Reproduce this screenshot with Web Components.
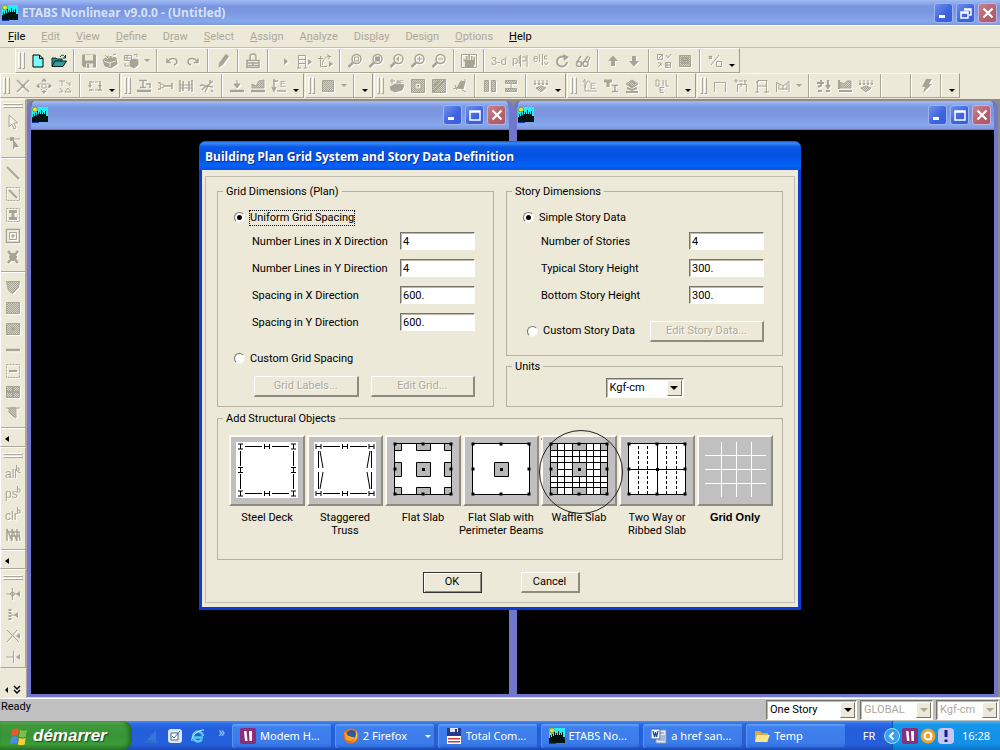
<!DOCTYPE html>
<html lang="fr">
<head>
<meta charset="utf-8">
<title>ETABS Nonlinear v9.0.0 - (Untitled)</title>
<style>
  html, body { margin: 0; height: 100%; }
  body { font: 11px/14px Roboto, "Liberation Sans", Arial, sans-serif; color: #000; overflow: hidden; }
</style>
</head>
<body>
<etabs-desktop></etabs-desktop>

<script>
/* Small helper: attach an open root holding the given styles and markup. */
function build(el, css, html) {
  const t = document.createElement('template');
  t.innerHTML = '<style>*{box-sizing:border-box}:host([hidden]){display:none}' + css + '</style>' + html;
  el.attachShadow({ mode: 'open' }).append(t.content.cloneNode(true));
  return el.shadowRoot;
}

const txt = (x, y, s, size) => `<text x="${x}" y="${y}" font-size="${size}" font-family="Liberation Sans, sans-serif" fill="currentColor" stroke="none">${s}</text>`;
const lens = '<circle cx="9.500" cy="6" r="4.500" stroke-width="1.500"/><path d="M6 9.500L1.500 14" stroke-width="2.500"/>';
const F = 'fill="currentColor" stroke="none"';
const H = 'fill="url(#dots)" ';

const ICONS = {
  new: '<path d="M3 2h6.500l3.500 3.500V14H3z" fill="#7ff" stroke="#000"/><path d="M9.500 2v3.500H13" stroke="#000"/>',
  open: '<path d="M1 13V5h4l1 1h5v2" fill="#2a8a8a" stroke="#033"/><path d="M1 13.500L4 8h11.500L12 13.500z" fill="#3a9a98" stroke="#022"/><path d="M9 4c2-3 4-2 5 .5M14.500 2v3h-3" stroke="#033"/>',
  save: `<path d="M1 1.500h14v13H3l-2-2z" ${F}/><path d="M4 2h8v5.500H4zM5 10.500h7V15H5z" fill="#ece9d8" stroke="none"/><path d="M6 11h2v4H6z" ${F}/>`,
  cube: `<path d="M1 7l5-4 8 2 1 6-6 4-6-2z" fill="currentColor"/><path d="M3 3l3 3M7 1v4M12 1l-2 4M2 8l5 2 7-2M8 10v4" stroke="#ece9d8"/><path d="M3 2l2 2M11 2l3-1"/>`,
  cube2: `<path d="M1.500 2.500h7v5h-7zM4 2v6M1 5h8" /><path d="M7 9l3-3 5 1v5l-4 3-4-2z" fill="currentColor"/><path d="M2 10v3h4M8 10l3 1 3-2" /><path d="M11 2l3-1v3"/>`,
  undo: '<path d="M3 5.500v4h4M3.500 9c3-5 9-4 9.500-.5.200 2-1.500 3-3 3.500" stroke-width="1.500"/>',
  redo: '<path d="M13 5.500v4H9M12.500 9C9.500 4 3.500 5 3 8.500c-.200 2 1.500 3 3 3.500" stroke-width="1.500"/>',
  pen: '<path d="M12.500 2L6 11" stroke-width="4"/><path d="M4.500 10L4 14l3-2z" fill="currentColor"/>',
  lock: '<path d="M2 7.500h12v7H2zM5 7V4a3 3 0 0 1 6 0v3M2 10h12M2 12.500h12M8 9v4" stroke-width="1.500"/>',
  run: `<path d="M9 5l4 3.500L9 12z" ${F}/>`,
  runframe: `<path d="M2.500 15V2.500h7V15M2 6.500h8M2 10.500h8M1 15h4M8 15h3"/><path d="M12 6l4 3-4 3z" ${F}/>`,
  rungraph: `<path d="M1 5.500h5M3.500 3v10.500H10M5 12C6 6 8 4 12 3.500h2M10 1.500l3 2-2 3"/><path d="M12 8l4 3-4 3z" ${F}/>`,
  zoomwin: lens + '<path d="M7.500 4h4v4h-4z"/>',
  zoomall: lens + `<path d="M7 3.500h5v5H7z" ${F}/>`,
  zoomprev: lens + `<path d="M7 6l3-2.500V8.500zM9 6h4" ${F}/>`,
  zoomin: lens + '<path d="M7 6h5M9.500 3.500v5"/>',
  zoomout: lens + '<path d="M7 6h5"/>',
  hand: `<path d="M.5 1.500h15v13H.5z"/><path d="M4 15V9L2 7l1-1 2 1V3h1.500v4h1V2H9v5h1V3h1.500v4h1V4H14v7l-2 4z" ${F}/>`,
  threed: txt(0, 12, '3-d', 11),
  plan: txt(0, 11, 'pl', 11) + '<path d="M8.500 2v12M10 4h4v4h-4M15 2v12"/>',
  elev: txt(0, 9, 'el', 10) + '<path d="M9.500 1v11M14.500 3h-3v3h3M11 9l2.500 3L15 9"/>',
  rotate: `<path d="M13 9a5 5 0 1 1-3-5" stroke-width="2"/><path d="M9 1l6 3-5 4z" ${F}/>`,
  glasses: '<circle cx="4" cy="11" r="2.500" stroke-width="1.500"/><circle cx="10.500" cy="11" r="2.500" stroke-width="1.500"/><path d="M2 9l4-6M9 9l4-6M6.500 10h1.500M13 9l2-5" stroke-width="1.500"/>',
  up: `<path d="M8 2.500l5 5.500h-3v5H6V8H3z" ${F}/>`,
  down: `<path d="M8 13.500L3 8h3V3h4v5h3z" ${F}/>`,
  props: '<path d="M1.500 1.500h5v5h-5zM3 5l3-3M10 2l2 3 3-4M2 10h3v3M9.500 9.500h5v5h-5zM2 14l3-3M11 10v4M9 12h6"/>',
  check: `<path d="M2.500 2.500h11v11h-11z" ${H}/><path d="M5 5h6v5H5zM6 6l2 3 3-4" stroke-width="1.500"/>`,
  percent: '<path d="M12 2L4 12M9.500 8.500h5v5h-5z"/><path d="M2 3l3 3M5 3L2 6" stroke-width="1.500"/>',
  joint: '<path d="M2 2l12 12M14 2L2 14" stroke-width="1.500"/><path d="M7 7h2v2H7z"/>',
  restrain: `<path d="M6 6h4v4H6z"/><path d="M8 0l2.500 3h-5zM8 16l2.500-3h-5zM0 8l3-2.500v5zM16 8l-3-2.500v5z" ${F}/><circle cx="8" cy="8" r="4.500" stroke-dasharray="2 1"/>`,
  tt: '<path d="M2 3h6M5 3v5M9 4l4 3M13 4v4M3 10l3 4M8 14h6l-3-4zM2 14h3"/>',
  swap: `<path d="M4 4h7M11 12H4" stroke-dasharray="3 1"/><path d="M3 8V3M13 3v9M2 12h3M11 12h4" stroke-width="1.500"/><path d="M1 7l2 3 2-3zM11 7l2 3 2-3z" ${F}/>`,
  ibeam: '<path d="M3 2.500h8M7 2.500v7M4 9.500h6M10 6h4v4" stroke-width="1.500"/><path d="M1 13h14" stroke-width="2.500"/>',
  release: '<path d="M7 8h8M1 5h3M1 11h3M15 5v6" stroke-width="1.500"/><circle cx="5" cy="8" r="2"/>',
  offset: '<path d="M2 2v12M14 2v12M5 3v10M11 3v10" stroke-width="1.500"/><path d="M2 7h12M2 10h12"/>',
  axes: '<path d="M1 8c3-3 4 1 7 0l6-5M6 14l3-6 5 1M3 12l4-4M11 2v4M12 12l2 2" stroke-width="1.500"/>',
  pload: `<path d="M8 2v6M5 6l3 4 3-4z" fill="currentColor"/><path d="M1 13h14" stroke-width="2.500"/>`,
  dload: `<path d="M2 10V6l4 2 3-5 5-1v8z" ${H}/><path d="M1 13h14" stroke-width="2.500"/>`,
  fload: txt(9, 9, 'E', 9) + '<path d="M3 1v11M1 9l2 4 2-4M2 3h5M6 13h9" stroke-width="1.500"/>',
  hatch: `<path d="M2.500 2.500h11v11h-11z" ${H}/>`,
  slab: `<path d="M1 9l5-3 9 1-2 5-7 2-4-2z" fill="currentColor"/><path d="M3 1v5M1 3h5M9 2v4M7 4h4" />` + txt(10, 7, 'E', 8),
  opening: `<path d="M1.500 1.500h13v13h-13z" ${H}/><path d="M5 5h6v6H5z" fill="#ece9d8"/><path d="M7 7h2v2H7z" ${F}/>`,
  diag: `<path d="M1.500 1.500h13v13h-13z" ${H}/><path d="M2 14L14 2M3 8l5-5" stroke-width="2"/>`,
  panel: `<path d="M5 10l4-7 4 1-2 7z" fill="currentColor"/><path d="M1 11l6-2M10 12l4 2M13 1v3M3 7l2 5"/>`,
  cols: `<path d="M2.500 2.500h4v11h-4zM9.500 2.500h4v11h-4z" ${H}/>`,
  rows: `<path d="M2.500 2.500h11v3h-11zM2.500 10.500h11v3h-11z" ${H}/><path d="M8 5v6"/>`,
  areaload: `<path d="M3 10l5-2 5 2-5 4z" ${H}/><path d="M2 2v5M6 2v5M10 2v5M14 2v5M1 5l1 2 1-2M5 5l1 2 1-2M9 5l1 2 1-2M13 5l1 2 1-2"/>`,
  specE: '<path d="M3 2v11h12M3 10C5 1 7 2 8 5M1 4l2-3"/>' + txt(8, 11, 'E', 9),
  tsec: '<path d="M1 3h8M5 3v6" stroke-width="3"/><path d="M9 7.500h6M12 7.500v6M9 13.500h6" stroke-width="1.500"/>',
  stack: `<path d="M2 6l6-4 6 4-6 4z" ${H}/><circle cx="8" cy="6" r="2.500"/><path d="M3 10l5 2 5-2M2 14h12" stroke-width="2"/>`,
  dle: '<path d="M2 2v6h3V2zM9 2v6M12 2v6h3M6 14V9M6 9.500h4M6 12h3M6 14.500h4"/>',
  frame1: '<path d="M2.500 14V4.500h11V14"/>',
  frame2: '<path d="M4.500 14V6.500h9V14"/><path d="M1 3h13M3 1v5M8 5v4M12 2v4" stroke-dasharray="4 1"/>',
  frame3: '<path d="M3.500 15V2.500h10M12.500 2v13M3 8h10M1 14h4M10 14h5M2 5l4-3"/>',
  frame4: '<path d="M1.500 14V4.500L8 8l6-4.500V14M4 6v5M12 6v6M4 11h8M8 8v4"/>',
  res1: '<path d="M5 2v5M1 5h7M12 2v7M10 7l2 3 2-3M2 13h4M10 13h4M2 9l4-2" stroke-width="2"/>',
  res2: `<path d="M3 10V4l4 2 3-3h4v7z" ${H}/><path d="M2 13h13M2 2v9" stroke-width="2"/>`,
  bolt: `<path d="M8 1h6l-3 5h3L5 15l2-6H4z" ${F}/>`,
  blank: '',
  pointer: '<path d="M4 1v12l3-3 2 5 2-1-2-5h4z" fill="#f4f2e8"/>',
  reshape: `<path d="M1 4h14"/><path d="M5 2h4v4H5z" ${F}/><path d="M8 4v11l2-3h4z" ${F}/>`,
  line: '<path d="M2 2l12 12" stroke-width="2"/>',
  linebox: '<path d="M1.500 1.500h13v13h-13z" stroke-dasharray="2 1"/><path d="M4 4l8 8" stroke-width="2"/>',
  ibox: '<path d="M1.500 1.500h13v13h-13z" stroke-dasharray="2 1"/><path d="M4 4.500h8M8 4v8M4 11.500h8" stroke-width="3"/>',
  sqbox: '<path d="M1.500 1.500h13v13h-13z" stroke-width="1.500"/><path d="M4.500 4.500h7v7h-7zM6 8h4M8 6v4"/>',
  star: '<path d="M3 2l10 12M13 2L3 14M8 4v8M4 8h8" stroke-width="2.500"/>',
  poly: `<path d="M1.500 2.500h13l-1 6-6 6-4-3z" ${H}/>`,
  area: `<path d="M1.500 2.500h13v11h-13z" ${H}/>`,
  areadot: `<path d="M1.500 2.500h13v11h-13z" ${H}/><path d="M6.500 6.500h3v3h-3z" ${F}/>`,
  wall: '<path d="M1 8h14" stroke-width="2.500"/>',
  wallbox: '<path d="M1.500 1.500h13v13h-13z" stroke-dasharray="2 1"/><path d="M4 8h8" stroke-width="2"/>',
  window: `<path d="M1.500 2.500h13v11h-13z" ${H}/><path d="M8 2v12M1 8h14" stroke-width="2"/>`,
  dim: `<path d="M1 3h14"/><path d="M4 3v4l4 4 3 2V3z" ${H}/>`,
  all: txt(0, 14, 'all', 12) + '<path d="M11.500 1v6M12 4h2v3h-2M13 8l3 1"/>',
  ps: txt(0, 13, 'ps', 12) + '<path d="M12.500 1v6M13 4h2v3h-2"/>',
  clr: txt(0, 14, 'clr', 12) + '<path d="M12.500 1v6M13 4h2v3h-2"/>',
  inter: '<path d="M2 14V2l5 12V2l5 12V2M1 5h13l1 9M5 9h9" stroke-width="1.500"/>',
  snap1: `<path d="M1 8h13M7.500 2v12"/><circle cx="7.500" cy="8" r="2"/><path d="M15 5v6l-4-3z" ${F}/>`,
  snap2: `<path d="M5 2v12" stroke-dasharray="2 1" stroke-width="3"/><path d="M6 8h5"/><path d="M13 5v6L9 8z" ${F}/>`,
  snap3: `<path d="M2 2l12 12M12 2L2 14"/><path d="M15 5v6l-4-3z" ${F}/>`,
  snap4: `<path d="M1 8h7M8.500 2v12"/><path d="M15 5v6l-4-3z" ${F}/>`,
  city: '<path d="M0 0h16v13H0z" fill="#1ef0f4" stroke="none"/><circle cx="3" cy="2.500" r="2.500" fill="#dde43a" stroke="#7b9c2e"/><path d="M0 15v-5h1V7h1v2h1V6h1v2h1V4h1v3h1V5h1v2h1V3h1v4h1V5h1v2h1V4h1v5h2v6z" fill="#041410" stroke="none"/><path d="M0 15.500h7" stroke="#1238c0"/>'
};

/* <glyph-icon name> : a 16px pictogram. */
customElements.define('glyph-icon', class extends HTMLElement {
  connectedCallback() {
    if (this.shadowRoot) return;
    build(this, ':host{display:block;width:16px;height:16px}svg{display:block;overflow:visible}',
      `<svg width="16" height="16" viewBox="0 0 16 16" fill="none" stroke="currentColor" aria-hidden="true"><defs><pattern id="dots" width="2" height="2" patternUnits="userSpaceOnUse"><g stroke="none"><rect width="2" height="2" fill="#d2d0c2"/><rect width="1" height="1" fill="#a6a494"/><rect x="1" y="1" width="1" height="1" fill="#a6a494"/></g></pattern></defs>${ICONS[this.getAttribute('name')] || ''}</svg>`);
  }
});

/* <tool-bar tools="..."> : "|" separator, "v" small arrow, "more" overflow arrow. */
customElements.define('tool-bar', class extends HTMLElement {
  connectedCallback() {
    if (this.shadowRoot) return;
    const html = this.getAttribute('tools').split(/\s+/).map(t =>
      t === '|' ? '<i class="sep"></i>' :
      t === 'v' ? '<button class="v off" aria-label="menu"><b></b></button>' :
      t === 'more' ? '<button class="more" aria-label="more"><b></b></button>' :
      `<button class="${t === 'new' || t === 'open' ? '' : 'off'}" aria-label="${t}"><glyph-icon name="${t}"></glyph-icon></button>`).join('');
    build(this, `
      :host{display:flex;align-items:stretch;height:25px;border-left:1px solid #fff;border-top:1px solid #fbfaf4;border-right:1px solid #9d9a8b;border-bottom:1px solid #aca899}
      .grip{flex:none;width:11px;padding:3px 2px;display:flex;gap:1px}
      .grip u{width:3px;border:1px solid;border-color:#fff #aca899 #aca899 #fff}
      button{flex:none;width:21px;border:0;padding:0;background:none;display:grid;place-items:center;color:#000}
      .off{color:#a6a494}.off glyph-icon{filter:drop-shadow(1px 1px 0 #fff)}
      .sep{flex:none;width:9px;display:block;background:linear-gradient(90deg,transparent 4px,#aca899 4px 5px,#fff 5px 6px,transparent 6px)}
      b{border:3px solid transparent;border-top-color:currentColor;border-bottom:0}
      .v{width:11px}.more{width:14px;align-items:end;padding-bottom:5px}
      :host([vertical]){flex-direction:column;height:auto;border-right-color:#aca899}
      :host([vertical]) .grip{width:auto;height:11px;flex-direction:column;padding:3px 2px}
      :host([vertical]) .grip u{width:auto;height:3px}
      :host([vertical]) button{width:auto;height:21px}
      :host([vertical]) .sep{width:auto;height:9px;background:linear-gradient(transparent 4px,#aca899 4px 5px,#fff 5px 6px,transparent 6px)}
      :host([vertical]) .more{height:14px;place-items:center start;padding:0 4px}
      :host([vertical]) .more b{border:3px solid transparent;border-right:4px solid #000;border-left:0}
    `, '<span class="grip"><u></u><u></u></span>' + html);
  }
});

/* <caption-buttons kind="restore|max"> */
customElements.define('caption-buttons', class extends HTMLElement {
  connectedCallback() {
    if (this.shadowRoot) return;
    const mid = this.getAttribute('kind') === 'restore'
      ? '<path d="M7 5h7v6h-2M7 6h7" /><path d="M4 8h7v6H4zM4 9h7"/>' : '<path d="M4 5h10v9H4zM4 6h10"/>';
    const s = p => `<svg width="18" height="18" viewBox="0 0 18 18" fill="none" stroke="#fff" stroke-width="1.500">${p}</svg>`;
    build(this, `:host{display:flex;gap:3px}
      button{width:19px;height:20px;padding:0;border:1px solid #9fb4ee;border-radius:3px;background:linear-gradient(135deg,#6f90ec,#3c62de 60%,#3a5fd8);display:grid;place-items:center}
      .x{background:linear-gradient(135deg,#c9838f,#b4606c 60%,#a9596a);border-color:#c3b3dc}svg{display:block}`,
      `<button aria-label="Minimize">${s('<path d="M4 12.500h6" stroke-width="3"/>')}</button><button aria-label="Maximize">${s(mid)}</button><button class="x" aria-label="Close">${s('<path d="M4.500 4.500l9 9M13.500 4.500l-9 9" stroke-width="2.200"/>')}</button>`);
  }
});

/* <title-bar kind> text </title-bar> : inactive caption. */
customElements.define('title-bar', class extends HTMLElement {
  connectedCallback() {
    if (this.shadowRoot) return;
    build(this, `:host{display:flex;align-items:center;gap:4px;padding:0 3px 0 2px;height:25px;color:#d6e1fa;
        background:linear-gradient(#a0baf2,#8fabee 3px,#7a96de 6px,#7b97e0 50%,#86a8ec 85%,#7c98df);font:700 12px/16px "Noto Sans","Open Sans",sans-serif}
      .t{flex:1}`, `<glyph-icon name="city"></glyph-icon><span class="t"><slot></slot></span><caption-buttons kind="${this.getAttribute('kind')}"></caption-buttons>`);
  }
});

customElements.define('menu-line', class extends HTMLElement {
  connectedCallback() {
    build(this, `:host{display:block;height:23px;border-top:1px solid #fff;border-bottom:1px solid #c2bfae}
      nav{display:flex;padding:4px 8px}
      button{border:0;background:none;padding:0;margin-right:16px;font:inherit;color:#000}
      button:disabled{color:#aca899}u{text-underline-offset:1px}`,
      '<nav>' + ['_File', '_Edit', '_View', '_Define', 'D_raw', '_Select', '_Assign', 'A_nalyze', 'Dis_play', 'Desi_gn', '_Options', '_Help']
        .map((m, i) => `<button ${i && i < 11 ? 'disabled' : ''}>${m.replace(/_(.)/, '<u>$1</u>')}</button>`).join('') + '</nav>');
  }
});

customElements.define('mdi-window', class extends HTMLElement {
  connectedCallback() {
    build(this, `:host{display:flex;flex-direction:column;border:solid #7177cb;border-width:0 4px 3px;border-radius:7px 7px 0 0;background:#000;overflow:hidden}
      title-bar{height:29px;margin:0 -2px;padding:0 5px 0 3px;border-bottom:1px solid #6a7bcc}`,
      '<title-bar kind="max"></title-bar>');
  }
});

/* <group-box label> : etched frame. */
customElements.define('group-box', class extends HTMLElement {
  connectedCallback() {
    build(this, `:host{display:block;min-width:0}
      fieldset{margin:0;padding:0;border:1px solid #b4b1a2;min-width:0;height:100%}
      legend{margin-left:5px;padding:0 3px;line-height:14px}`,
      `<fieldset><legend>${this.getAttribute('label')}</legend><slot></slot></fieldset>`);
  }
});

customElements.define('field-row', class extends HTMLElement {
  connectedCallback() {
    build(this, `:host{display:flex;justify-content:space-between;align-items:center;height:17px}
      label{padding-top:2px}
      input{width:75px;height:18px;padding:0 2px;font:inherit;border:1px solid;border-color:#77756a #fff #fff #77756a;box-shadow:inset 1px 1px 0 #bdbaa9;background:#fff;border-radius:0}`,
      `<label for="f">${this.getAttribute('label')}</label><input id="f" value="${this.getAttribute('value')}">`);
  }
});

customElements.define('combo-box', class extends HTMLElement {
  connectedCallback() {
    const off = this.hasAttribute('disabled');
    build(this, `:host{display:grid;grid-template-columns:1fr 17px;height:20px;border:1px solid;border-color:#77756a #fff #fff #77756a;box-shadow:inset 1px 1px 0 #bdbaa9;background:#fff;color:#000}
      :host([disabled]){color:#aca899}
      select{grid-area:1/1/2/3;appearance:none;border:0;background:none;padding:0 17px 0 3px;font:inherit;color:inherit;opacity:1;border-radius:0;min-width:0}
      span{grid-area:1/2;margin:1px;pointer-events:none;background:#ece9d8;border:1px solid;border-color:#fff #77756a #77756a #fff;display:grid;place-items:center}
      b{border:4px solid transparent;border-top-color:currentColor;border-bottom:0}`,
      `<select aria-label="${this.getAttribute('name')}" ${off ? 'disabled' : ''}><option>${this.getAttribute('value')}</option></select><span><b></b></span>`);
  }
});

/* Plan drawings for the structural object buttons, on a 72 x 67 canvas. */
const I = (x, y) => `<path d="M${x - 2.5} ${y - 2.5}h5M${x} ${y - 2.5}v5M${x - 2.5} ${y + 2.5}h5"/>`;
const Hb = (x, y) => `<path d="M${x - 2.5} ${y - 2.5}v5M${x - 2.5} ${y}h5M${x + 2.5} ${y - 2.5}v5"/>`;
const dots = [[8, 7], [36, 7], [64, 7], [8, 32], [64, 32], [8, 57], [36, 57], [64, 57]].map(p => `<rect x="${p[0] - 1.5}" y="${p[1] - 1.5}" width="3" height="3" fill="#000" stroke="none"/>`).join('');
const mid = '<path d="M29.500 25.500h14v14h-14z" fill="#b8b8b8"/><path d="M35 31h3v3h-3z" fill="#000" stroke="none"/>';
const paper = '<path d="M7.500 6.500h57v51h-57z" fill="#fff"/>';
const edge = '<path d="M14 9.500h17M41 9.500h17M14 56.500h17M41 56.500h17"/>';
const xs = [7.5, 14.5, 21.5, 29.5, 36.5, 43.5, 50.5, 57.5, 64.5], ys = [6.5, 13.5, 19.5, 25.5, 32.5, 39.5, 45.5, 50.5, 57.5];
const drops = '<path d="M7.500 6.500h7v7h-7zM57.500 6.500h7v7h-7zM7.500 50.500h7v7h-7zM57.500 50.500h7v7h-7zM29.500 6.500h14v7h-14zM29.500 50.500h14v7h-14zM7.500 25.500h7v14h-7zM57.500 25.500h7v14h-7z" fill="#b8b8b8"/>';
const sheet = '<path d="M5 5h62v56H5z" fill="#fff" stroke="none"/>';
const PLANS = {
  steel: sheet + edge + '<path d="M9.500 14v15M9.500 37v15M62.500 14v15M62.500 37v15"/>' + [9.5, 62.5].map(x => I(x, 9.5) + I(x, 33) + I(x, 56.5)).join('') + Hb(36, 9.5) + Hb(36, 56.5),
  truss: sheet + edge + [9.5, 36, 62.5].map(x => Hb(x, 9.5) + Hb(x, 56.5)).join('') + '<path d="M9.500 14v17M11 14l3 17M9.500 35v17M14 35l-3 17M62.500 14v17M61 14l-3 17M62.500 35v17M58 35l3 17"/>',
  flat: paper + drops + mid + dots,
  beams: paper + mid + dots,
  waffle: paper + xs.map(x => `<path d="M${x} 6.500v51"/>`).join('') + ys.map(y => `<path d="M7.500 ${y}h57"/>`).join('') + drops + mid + dots,
  ribbed: paper + '<path d="M36.500 7v50M8 32.500h56"/><path d="M17.500 9v48M26.500 9v48M45.500 9v48M55.500 9v48" stroke-dasharray="3 2"/>' + dots + '<path d="M35 31h3v3h-3z" fill="#000" stroke="none"/>',
  grid: '<path d="M22.500 5v55M37.500 5v55M52.500 5v55M6 18.500h61M6 32.500h61M6 46.500h61" stroke="#fff"/>'
};

customElements.define('plan-choice', class extends HTMLElement {
  connectedCallback() {
    const ring = this.hasAttribute('ringed')
      ? '<svg class="ring" width="84" height="84" viewBox="0 0 84 84" fill="none" stroke="#222"><circle cx="42" cy="42" r="41.500"/><path d="M2 9h1" /></svg>' : '';
    build(this, `:host{display:flex;flex-direction:column;position:relative;text-align:center;line-height:13px}
      :host([bold]){font-weight:700;font-family:"Liberation Sans",sans-serif}
      :host([ringed]){z-index:1}
      button{width:76px;height:71px;padding:0;background:#c0c0c0;border:2px solid;border-color:#fbfaf4 #8e8c80 #8e8c80 #fbfaf4}
      button svg{display:block}
      .cap{margin:5px -2px 0 -4px;white-space:nowrap}
      .ring{position:absolute;left:-2px;top:-5px;pointer-events:none}`,
      `<button aria-labelledby="c"><svg width="72" height="67" viewBox="0 0 72 67" fill="none" stroke="#000">${PLANS[this.getAttribute('plan')]}</svg></button><span class="cap" id="c"><slot></slot></span>${ring}`);
  }
});

customElements.define('grid-dialog', class extends HTMLElement {
  connectedCallback() {
    build(this, `
      :host{display:block;width:602px;background:#0b46dd;border-radius:7px 7px 0 0;border:solid #0a3ed0;border-width:0 3px 3px}
      h1{margin:0 -3px;height:29px;padding:0 6px;border-radius:7px 7px 0 0;font:700 12px/32px "Open Sans",sans-serif;color:#fff;text-shadow:1px 1px 0 #0a2c90;
        background:linear-gradient(#0a55e0,#3a8af8 2px,#0a58e6 6px,#0252e2 50%,#0561f8 85%,#0354e4)}
      .pad{background:#ece9d8;padding:6px 3px 4px}
      .frame{border:1px solid #c0bdae;padding:8px 11px 9px;display:grid;gap:5px}
      .cols{display:grid;grid-template-columns:1fr 1fr;column-gap:12px}
      .right{display:grid;gap:4px}
      .stack{padding:11px 18px 8px 16px;display:grid;gap:10px}
      .story{padding-bottom:13px}
      .radio{display:flex;align-items:center;gap:5px;height:16px;margin-bottom:-3px}
      .radio input{appearance:none;margin:0;width:11px;height:11px;border-radius:50%;background:#fff;border:1px solid;border-color:#77756a #f4f2e8 #f4f2e8 #77756a;display:grid;place-items:center}
      .radio input:checked::before{content:"";width:5px;height:5px;border-radius:50%;background:#000}
      .focus{outline:1px dotted #000}
      field-row{margin-left:18px}
      .later{margin:10px 0 -1px}
      .pair{display:grid;grid-template-columns:1fr 1fr;gap:12px;margin-left:20px}
      .split{display:flex;justify-content:space-between;margin-top:7px;padding-left:4px;align-items:center}
      .split .radio{margin:0}
      button{height:21px;padding:0;font:inherit;color:#000;background:#ece9d8;border:solid;border-width:1px 2px 2px 1px;border-color:#fff #8e8c80 #8e8c80 #fff;border-radius:0}
      button:disabled{color:#aca899;text-shadow:1px 1px 0 #fff}
      .edit{width:114px}
      .unit{padding:4px 0 8px;display:grid;justify-content:center}
      .unit combo-box{width:78px}
      .plans{display:grid;grid-template-columns:repeat(7,78px);padding:9px 0 22px 11px;min-height:133px}
      .ok{display:flex;justify-content:center;gap:39px;padding:7px 0 0 2px}
      .ok button{width:59px}.ok .def{border:1px solid #333;box-shadow:inset 1px 1px 0 #fff,inset -1px -1px 0 #8e8c80}
    `, `
      <h1>Building Plan Grid System and Story Data Definition</h1>
      <div class="pad"><div class="frame">
        <div class="cols">
          <group-box label="Grid Dimensions (Plan)"><div class="stack">
            <div class="radio"><input type="radio" name="g" id="g1" checked><label for="g1" class="focus">Uniform Grid Spacing</label></div>
            <field-row label="Number Lines in X Direction" value="4"></field-row>
            <field-row label="Number Lines in Y Direction" value="4"></field-row>
            <field-row label="Spacing in X Direction" value="600."></field-row>
            <field-row label="Spacing in Y Direction" value="600."></field-row>
            <div class="radio later"><input type="radio" name="g" id="g2"><label for="g2">Custom Grid Spacing</label></div>
            <div class="pair"><button disabled>Grid Labels...</button><button disabled>Edit Grid...</button></div>
          </div></group-box>
          <div class="right">
            <group-box label="Story Dimensions"><div class="stack story">
              <div class="radio"><input type="radio" name="s" id="s1" checked><label for="s1">Simple Story Data</label></div>
              <field-row label="Number of Stories" value="4"></field-row>
              <field-row label="Typical Story Height" value="300."></field-row>
              <field-row label="Bottom Story Height" value="300."></field-row>
              <div class="split"><div class="radio"><input type="radio" name="s" id="s2"><label for="s2">Custom Story Data</label></div><button class="edit" disabled>Edit Story Data...</button></div>
            </div></group-box>
            <group-box label="Units"><div class="unit"><combo-box name="Units" value="Kgf-cm"></combo-box></div></group-box>
          </div>
        </div>
        <group-box label="Add Structural Objects"><div class="plans">
          <plan-choice plan="steel">Steel Deck</plan-choice>
          <plan-choice plan="truss">Staggered<br>Truss</plan-choice>
          <plan-choice plan="flat">Flat Slab</plan-choice>
          <plan-choice plan="beams">Flat Slab with<br>Perimeter Beams</plan-choice>
          <plan-choice plan="waffle" ringed>Waffle Slab</plan-choice>
          <plan-choice plan="ribbed">Two Way or<br>Ribbed Slab</plan-choice>
          <plan-choice plan="grid" bold>Grid Only</plan-choice>
        </div></group-box>
        <div class="ok"><button class="def">OK</button><button>Cancel</button></div>
      </div></div>`);
  }
});

const TASK = {
  modem: '<rect width="16" height="16" rx="2" fill="#8a2f7c"/><path d="M4 3h2.500l1 10H5zM9 3h3v10h-2.500z" fill="#fff"/>',
  firefox: '<circle cx="8" cy="8" r="7.500" fill="#e8701c"/><circle cx="8.500" cy="6.500" r="4.500" fill="#31589c"/><path d="M1 4c3 1 3 4 5 4s3 2 6 1c-1 4-7 5-9 2z" fill="#f9a72b"/><path d="M13 3c3 4 1 10-4 11 4-3 4-7 4-11z" fill="#f6c23c"/>',
  floppy: '<path d="M1 0h14v9H1z" fill="#27398c"/><path d="M4 0h8v4H4z" fill="#dfe6f4"/><path d="M9 1h2v3H9z" fill="#27398c"/><path d="M1 8h14v8H1z" fill="#fff"/><path d="M2 10h12v1.500H2zM2 13h12v1.500H2z" fill="#d23a3a"/>',
  word: '<path d="M5 2h10v13H5z" fill="#e9effa" stroke="#7e92bd"/><path d="M8 5h5M10 8h4M10 10h4M7 12h7" stroke="#6d86c0"/><path d="M0 1h9v10H0z" fill="#f7f9fe" stroke="#41609e"/><path d="M2 3l1.500 6L4.500 4l1 5L7 3" stroke="#244a9a" fill="none" stroke-width="1.200"/>',
  folder: '<path d="M1 3h5l2 2h6v9H1z" fill="#d9ab3a"/><path d="M3 7h13l-3 7H1z" fill="#fbe48a"/>',
  flag: '<path d="M2 2c2-1 4-1 6 0L7 8C5 7 3 7 1 8z" fill="#e8582c"/><path d="M9 2.500c2 1 4 1 6 0L14 8.500c-2 1-4 1-6 0z" fill="#7cc142"/><path d="M1 9c2-1 4-1 6 0l-1 6c-2-1-4-1-6 0z" fill="#4f8bea"/><path d="M8 9.500c2 1 4 1 6 0l-1 6c-2 1-4 1-6 0z" fill="#f8ce3c"/>',
  wedge: '<path d="M3 12l9-10v12z" fill="#3f7fd8" opacity=".7"/><path d="M1 14h13" stroke="#2f7fb0"/>',
  outlook: '<rect x="1" y="1" width="14" height="14" rx="3" fill="#dce8f4"/><path d="M4 5h7v7H4z" fill="#fff" stroke="#4c6a96"/><path d="M5 8l2 2 6-7" stroke="#4c6a96" fill="none"/>',
  ie: '<path d="M13 9.500H4.500M13 8a5 5 0 1 0-1 3.500" fill="none" stroke="#58c8f8" stroke-width="2.500"/><path d="M2 13C0 9 9 1 14 2" fill="none" stroke="#bfe8ff"/>',
  back: '<circle cx="8" cy="8" r="7.500" fill="#3aa0ee" stroke="#9fdcff"/><path d="M9.500 4.500L6 8l3.500 3.500" fill="none" stroke="#fff" stroke-width="2"/>',
  avast: '<circle cx="8" cy="8" r="7.500" fill="#f0a030"/><circle cx="8" cy="8" r="3.500" fill="none" stroke="#fff" stroke-width="2"/><path d="M11 5v7" stroke="#fff" stroke-width="2"/>',
  alert: '<rect width="16" height="16" rx="4" fill="#c5c8f4"/><path d="M8 2v7M8 11.500v2.500" stroke="#1a1a90" stroke-width="3"/>'
};
/* <task-icon name size> */
customElements.define('task-icon', class extends HTMLElement {
  connectedCallback() {
    const s = this.getAttribute('size') || 16;
    build(this, ':host{display:block;flex:none}svg{display:block}',
      `<svg width="${s}" height="${s}" viewBox="0 0 16 16" aria-hidden="true">${TASK[this.getAttribute('name')]}</svg>`);
  }
});

customElements.define('task-bar', class extends HTMLElement {
  connectedCallback() {
    const task = (icon, text, cls = '') => `<button class="task ${cls}">${icon}<span>${text}</span>${cls === 'more' ? '<b></b>' : ''}</button>`;
    const ti = n => `<task-icon name="${n}"></task-icon>`;
    build(this, `
      :host{display:flex;height:29px;color:#fff;background:linear-gradient(#4a8cf2,#2a6be8 3px,#245edb 8px,#2560dc 80%,#1a48b4)}
      .start{flex:none;width:132px;border:0;padding:0 0 0 10px;display:flex;align-items:center;gap:5px;color:#fff;font:italic 700 17px/26px "Liberation Sans",sans-serif;text-shadow:1px 1px 1px #1c4a1c;
        border-radius:0 9px 9px 0;background:linear-gradient(#6fc06a,#3f9a3c 4px,#389436 50%,#3a9c38 80%,#2a7a28);box-shadow:inset -3px 0 4px #246a24}
      .quick{flex:none;width:98px;display:flex;align-items:center;gap:7px;padding-left:12px;color:#a9cbff}
      .quick span{font-size:15px;margin:-8px 0 0 5px}
      .tasks{flex:1;min-width:0;display:grid;grid-template-columns:repeat(6,1fr);gap:3px;padding:3px 0 2px 2px}
      .task{min-width:0;border:0;border-radius:3px;padding:0 8px;display:flex;align-items:center;gap:4px;color:#fff;font:11px/14px "Noto Sans",sans-serif;white-space:nowrap;
        background:linear-gradient(#6aa4fa,#3f80ee 3px,#3b7bea 80%,#2f6ad8);box-shadow:inset 1px 0 0 #5d97f6,inset -1px -1px 0 #2a5cc4}
      .task span{flex:1;text-align:left;overflow:hidden}
      .more{padding-right:4px}
      b{border:3px solid transparent;border-top-color:#fff;border-bottom:0}
      .lang{flex:none;width:46px;text-align:center;line-height:29px;font-family:"Noto Sans",sans-serif}
      .tray{flex:none;width:108px;display:flex;align-items:center;gap:2px;font-family:"Noto Sans",sans-serif;background:linear-gradient(#3fb4f4,#1596ea 4px,#1290e6 80%,#0c72c4);border-left:1px solid #0b5cb8}
      .tray :first-child{margin-left:-9px}.tray time{margin-left:6px}
    `, `
      <button class="start"><task-icon name="flag" size="18"></task-icon>démarrer</button>
      <div class="quick">${ti('wedge')}${ti('outlook')}${ti('ie')}<span>»</span></div>
      <div class="tasks">
        ${task(ti('modem'), 'Modem H...')}${task(ti('firefox'), '2 Firefox', 'more')}${task(ti('floppy'), 'Total Com...')}
        ${task('<glyph-icon name="city"></glyph-icon>', 'ETABS No...')}${task(ti('word'), 'a href san...')}${task(ti('folder'), 'Temp')}
      </div>
      <div class="lang">FR</div>
      <div class="tray">${ti('back')}${ti('modem')}${ti('avast')}${ti('alert')}<time>16:28</time></div>`);
  }
});

customElements.define('etabs-desktop', class extends HTMLElement {
  connectedCallback() {
    build(this, `
      :host{display:flex;flex-direction:column;height:100vh;background:#ece9d8}
      title-bar,menu-line,task-bar,.row,.status{flex:none}
      .row{display:flex}
      .row.first{padding-left:15px}
      .row tool-bar{margin-right:1px}
      main{flex:1;min-height:0;display:grid;grid-template-columns:27px 1fr;padding-top:1px}
      aside{display:flex;flex-direction:column;border-right:1px solid #aca899;overflow:hidden}
      aside tool-bar+tool-bar{padding-top:2px}
      .rest{margin-top:auto;display:flex;align-items:center;padding:0 4px;height:16px}
      .mdi{display:grid;grid-template-columns:1fr 1fr;background:#8e8c84;padding:2px 2px 0 0;border-bottom:1px solid #d8d6cc}
      .status{height:23px;background:#c0c0c0;border-top:1px solid #fff;display:flex;gap:3px;padding:1px 1px 2px;align-items:start}
      .status span{flex:1}
      .layer{position:fixed;inset:0;display:grid;place-items:center;pointer-events:none}
      .layer>*{pointer-events:auto}
    `, `
      <title-bar kind="restore">ETABS Nonlinear v9.0.0 - (Untitled)</title-bar>
      <menu-line></menu-line>
      <div class="row first"><tool-bar tools="new open | save cube cube2 v | undo redo | pen | lock | run runframe rungraph | zoomwin zoomall zoomprev zoomin zoomout | hand | threed plan elev rotate glasses | up down | props check | percent more"></tool-bar></div>
      <div class="row">
        <tool-bar tools="joint restrain tt | swap more"></tool-bar>
        <tool-bar tools="ibeam release offset axes | pload dload fload more"></tool-bar>
        <tool-bar tools="hatch v | more"></tool-bar>
        <tool-bar tools="slab opening diag panel | cols rows | areaload more"></tool-bar>
        <tool-bar tools="specE tsec stack | dle | more"></tool-bar>
        <tool-bar tools="frame1 frame2 frame3 frame4 v | res1 res2 areaload | blank | bolt | more"></tool-bar>
      </div>
      <main>
        <aside>
          <tool-bar vertical tools="pointer reshape | line linebox ibox sqbox star | poly area areadot wall wallbox window dim | more"></tool-bar>
          <tool-bar vertical tools="all ps clr inter | more"></tool-bar>
          <tool-bar vertical tools="snap1 snap2 snap3 snap4"></tool-bar>
          <div class="rest"><svg width="18" height="10" viewBox="0 0 18 10" fill="none" stroke="#000"><path d="M4 2v6L1 5z" fill="#000" stroke="none"/><path d="M10 1l3 3 3-3M10 5l3 3 3-3" stroke-width="1.500"/></svg></div>
        </aside>
        <div class="mdi"><mdi-window></mdi-window><mdi-window></mdi-window></div>
      </main>
      <div class="status"><span>Ready</span>
        <combo-box style="width:91px" name="Story" value="One Story"></combo-box>
        <combo-box style="width:73px" name="Axes" value="GLOBAL" disabled></combo-box>
        <combo-box style="width:63px" name="Units" value="Kgf-cm" disabled></combo-box></div>
      <task-bar></task-bar>
      <div class="layer"><grid-dialog></grid-dialog></div>`);
  }
});
</script>
</body>
</html>
